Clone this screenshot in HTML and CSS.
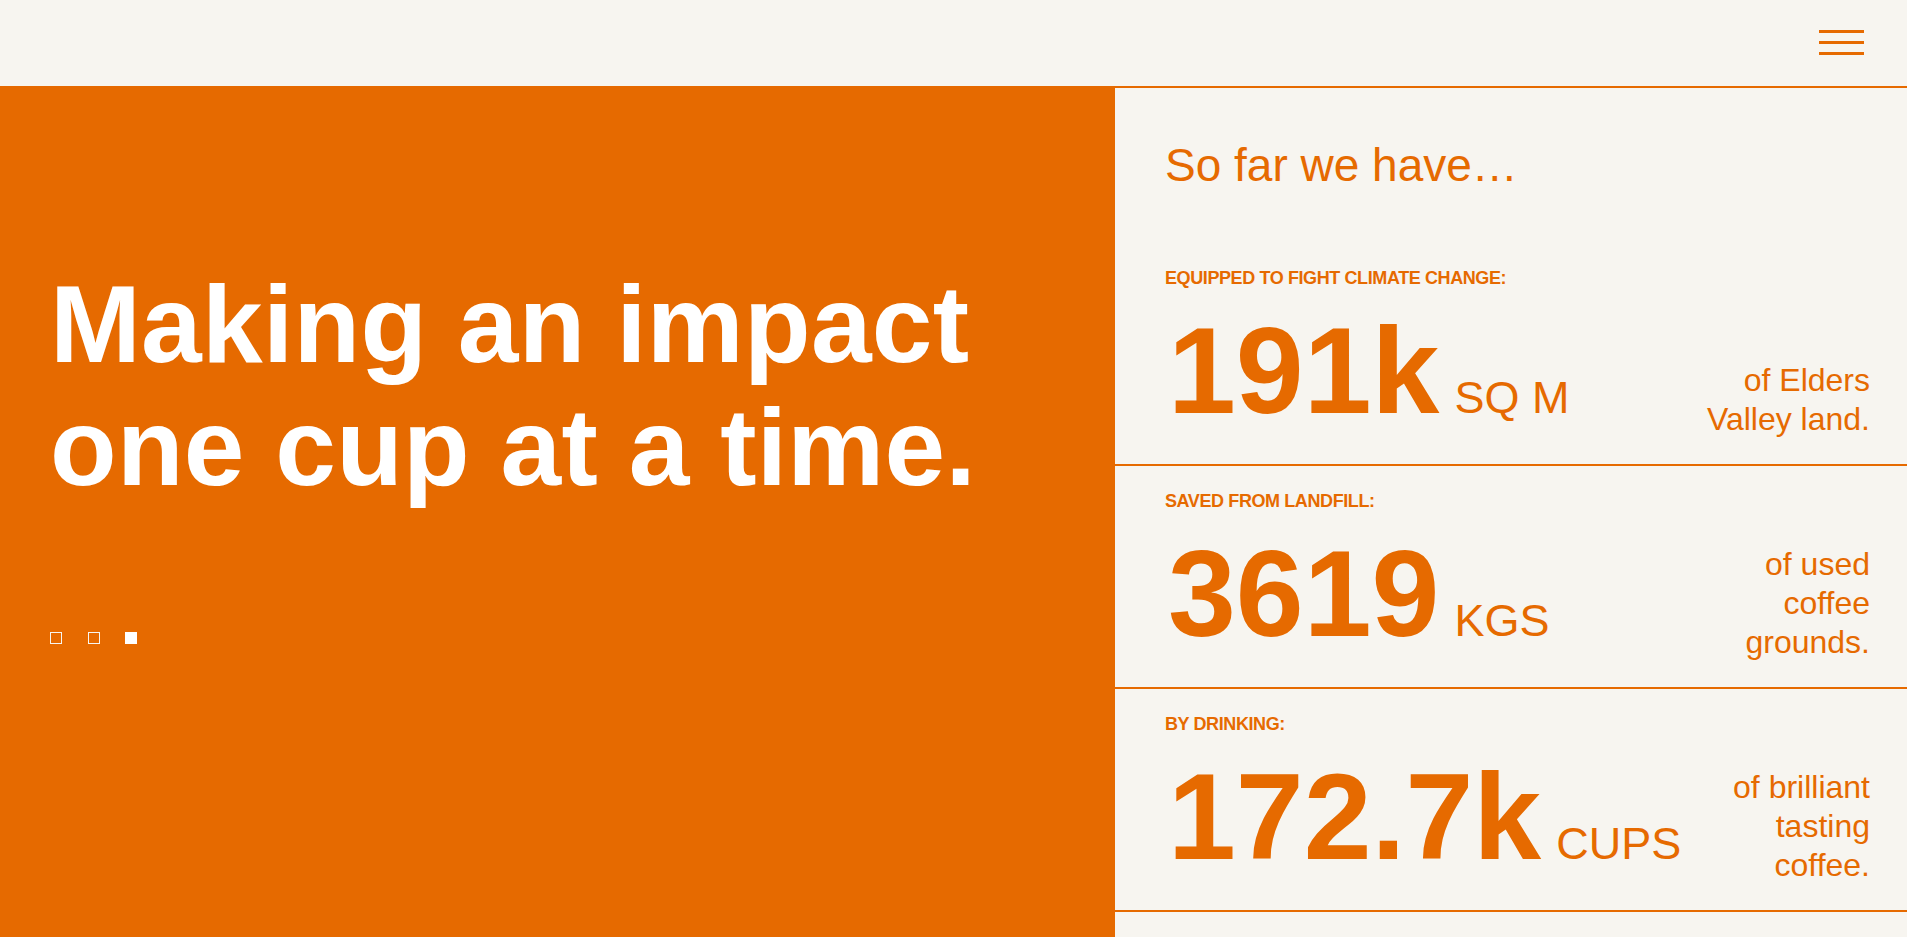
FILE: index.html
```html
<!DOCTYPE html>
<html lang="en">
<head>
<meta charset="utf-8">
<title>Making an impact one cup at a time.</title>
<link rel="stylesheet" href="styles.css">
</head>
<body>
<header class="site-header">
  <button class="menu-btn" aria-label="Menu">
    <span class="menu-line"></span>
    <span class="menu-line"></span>
    <span class="menu-line"></span>
  </button>
</header>
<main class="impact">
  <section class="hero">
    <h1 class="hero-title">Making an impact<br>one cup at a time.</h1>
    <div class="slider-dots">
      <span class="dot"></span>
      <span class="dot"></span>
      <span class="dot is-active"></span>
    </div>
  </section>
  <section class="stats">
    <h2 class="stats-intro">So far we have…</h2>
    <div class="stat">
      <p class="stat-label">EQUIPPED TO FIGHT CLIMATE CHANGE:</p>
      <div class="stat-body">
        <p class="stat-figure"><span class="stat-num">191k</span><span class="stat-unit">SQ M</span></p>
        <p class="stat-desc">of Elders<br>Valley land.</p>
      </div>
    </div>
    <div class="stat">
      <p class="stat-label">SAVED FROM LANDFILL:</p>
      <div class="stat-body">
        <p class="stat-figure"><span class="stat-num">3619</span><span class="stat-unit">KGS</span></p>
        <p class="stat-desc">of used<br>coffee<br>grounds.</p>
      </div>
    </div>
    <div class="stat">
      <p class="stat-label">BY DRINKING:</p>
      <div class="stat-body">
        <p class="stat-figure"><span class="stat-num">172.7k</span><span class="stat-unit">CUPS</span></p>
        <p class="stat-desc">of brilliant<br>tasting<br>coffee.</p>
      </div>
    </div>
  </section>
</main>
</body>
</html>
```

FILE: styles.css
```css
* {
  box-sizing: border-box;
}

html, body {
  margin: 0;
  padding: 0;
}

body {
  background: #f7f5f0;
  color: #e66a00;
  font-family: "Liberation Sans", Arial, sans-serif;
  overflow: hidden;
}

.site-header {
  height: 88px;
  border-bottom: 2px solid #e66a00;
  display: flex;
  justify-content: flex-end;
  align-items: flex-start;
  padding: 30px 43px 0 0;
}

.menu-btn {
  width: 45px;
  padding: 0;
  border: 0;
  background: transparent;
  display: flex;
  flex-direction: column;
  gap: 8.5px;
  cursor: pointer;
}

.menu-line {
  display: block;
  height: 2.5px;
  width: 100%;
  background: #e66a00;
}

.impact {
  display: grid;
  grid-template-columns: 1115px 1fr;
  min-height: calc(100vh - 88px);
}

.hero {
  background: #e66a00;
  color: #ffffff;
  padding: 175px 40px 0 50px;
}

.hero-title {
  margin: 0;
  font-size: 109px;
  line-height: 123px;
  font-weight: 700;
  letter-spacing: 0.3px;
}

.slider-dots {
  display: flex;
  gap: 25.5px;
  margin-top: 123px;
}

.dot {
  width: 12px;
  height: 12px;
  border: 1px solid #f7f5f0;
}

.dot.is-active {
  background: #ffffff;
  border-color: #ffffff;
}

.stats {
  padding-top: 50px;
}

.stats-intro {
  margin: 0 0 50px;
  padding: 0 37px 0 50px;
  font-size: 46px;
  line-height: 55px;
  font-weight: 400;
}

.stat {
  border-bottom: 2px solid #e66a00;
  padding: 24px 37px 32px 50px;
}

.stat-label {
  margin: 0 0 21px;
  font-size: 18px;
  line-height: 22px;
  font-weight: 700;
  letter-spacing: -0.4px;
}

.stat-body {
  display: flex;
  justify-content: space-between;
  align-items: flex-end;
}

.stat-figure {
  margin: 0;
  padding-left: 3px;
  display: flex;
  align-items: baseline;
  gap: 15px;
}

.stat-num {
  font-size: 122px;
  line-height: 122px;
  font-weight: 700;
  letter-spacing: 0;
}

.stat-unit {
  font-size: 45px;
  line-height: 45px;
  font-weight: 400;
}

.stat-desc {
  margin: 0 0 -7px;
  text-align: right;
  font-size: 32px;
  line-height: 39px;
}
```
